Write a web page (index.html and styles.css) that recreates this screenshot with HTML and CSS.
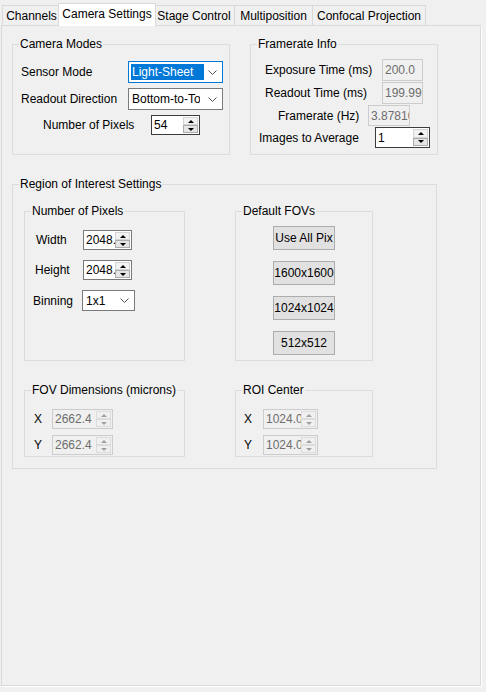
FILE: index.html
```html
<!DOCTYPE html>
<html>
<head>
<meta charset="utf-8">
<link rel="stylesheet" href="styles.css">
</head>
<body>
<div class="window">
  <div class="tabs">
    <div class="tab t1">Channels</div>
    <div class="tab t2 sel">Camera Settings</div>
    <div class="tab t3">Stage Control</div>
    <div class="tab t4">Multiposition</div>
    <div class="tab t5">Confocal Projection</div>
  </div>
  <div class="panel">
    <div class="toprow">
      <fieldset class="grp cam">
        <legend>Camera Modes</legend>
        <div class="row cam-r1">
          <span class="lbl w107">Sensor Mode</span>
          <div class="combo focus w95 h22">
            <span class="ctext hl">Light-Sheet</span>
            <svg class="chev" width="9" height="5" viewBox="0 0 9 5"><polyline points="0.5,0.5 4.5,4.5 8.5,0.5" fill="none" stroke="#555" stroke-width="1"/></svg>
          </div>
        </div>
        <div class="row cam-r2">
          <span class="lbl w107">Readout Direction</span>
          <div class="combo w95 h22">
            <span class="ctext">Bottom-to-Top</span>
            <svg class="chev" width="9" height="5" viewBox="0 0 9 5"><polyline points="0.5,0.5 4.5,4.5 8.5,0.5" fill="none" stroke="#555" stroke-width="1"/></svg>
          </div>
        </div>
        <div class="row cam-r3">
          <span class="lbl w108">Number of Pixels</span>
          <div class="spin dark w49 h20"><span class="val">54</span><span class="btns"><span class="up"></span><span class="dn"></span></span></div>
        </div>
      </fieldset>
      <fieldset class="grp fr">
        <legend>Framerate Info</legend>
        <div class="row fr-a">
          <span class="lbl w117">Exposure Time (ms)</span>
          <div class="tbox dis w41 h22">200.0</div>
        </div>
        <div class="row fr-b">
          <span class="lbl w117">Readout Time (ms)</span>
          <div class="tbox dis w41 h22">199.9952</div>
        </div>
        <div class="row fr-c">
          <span class="lbl w90">Framerate (Hz)</span>
          <div class="tbox dis w42 h21">3.878104</div>
        </div>
        <div class="row fr-d">
          <span class="lbl w116">Images to Average</span>
          <div class="spin dark w55 h21"><span class="val">1</span><span class="btns"><span class="up"></span><span class="dn"></span></span></div>
        </div>
      </fieldset>
    </div>
    <fieldset class="grp roi">
      <legend>Region of Interest Settings</legend>
      <div class="roigrid">
        <fieldset class="grp npix">
          <legend>Number of Pixels</legend>
          <div class="row np-1">
            <span class="lbl w47">Width</span>
            <div class="spin w49 h20"><span class="val">2048.0</span><span class="btns"><span class="up"></span><span class="dn"></span></span></div>
          </div>
          <div class="row np-2">
            <span class="lbl w48">Height</span>
            <div class="spin w49 h20"><span class="val">2048.0</span><span class="btns"><span class="up"></span><span class="dn"></span></span></div>
          </div>
          <div class="row np-3">
            <span class="lbl w49">Binning</span>
            <div class="combo w53 h21">
              <span class="ctext">1x1</span>
              <svg class="chev" width="9" height="5" viewBox="0 0 9 5"><polyline points="0.5,0.5 4.5,4.5 8.5,0.5" fill="none" stroke="#555" stroke-width="1"/></svg>
            </div>
          </div>
        </fieldset>
        <fieldset class="grp fovs">
          <legend>Default FOVs</legend>
          <div class="btncol">
            <div class="btn">Use All Pix</div>
            <div class="btn">1600x1600</div>
            <div class="btn">1024x1024</div>
            <div class="btn">512x512</div>
          </div>
        </fieldset>
        <fieldset class="grp dims">
          <legend>FOV Dimensions (microns)</legend>
          <div class="row d-1">
            <span class="lbl w18">X</span>
            <div class="spin dis w61 h20"><span class="val">2662.4</span><span class="btns"><span class="up"></span><span class="dn"></span></span></div>
          </div>
          <div class="row d-2">
            <span class="lbl w18">Y</span>
            <div class="spin dis w61 h20"><span class="val">2662.4</span><span class="btns"><span class="up"></span><span class="dn"></span></span></div>
          </div>
        </fieldset>
        <fieldset class="grp center">
          <legend>ROI Center</legend>
          <div class="row c-1">
            <span class="lbl w19">X</span>
            <div class="spin dis w55 h20"><span class="val">1024.0</span><span class="btns"><span class="up"></span><span class="dn"></span></span></div>
          </div>
          <div class="row c-2">
            <span class="lbl w19">Y</span>
            <div class="spin dis w55 h20"><span class="val">1024.0</span><span class="btns"><span class="up"></span><span class="dn"></span></span></div>
          </div>
        </fieldset>
      </div>
    </fieldset>
  </div>
</div>
</body>
</html>
```

FILE: styles.css
```css
html, body {
  margin: 0;
  padding: 0;
  background: #f0f0f0;
}
body {
  font-family: "Liberation Sans", Arial, sans-serif;
  font-size: 12px;
  color: #000;
}
.window {
  width: 486px;
  height: 692px;
  background: #f0f0f0;
  overflow: hidden;
}

/* Tabs */
.tabs {
  display: flex;
  align-items: flex-end;
  height: 25px;
  padding-left: 2px;
}
.tab {
  box-sizing: border-box;
  height: 20px;
  border: 1px solid #d9d9d9;
  border-bottom: none;
  background: #f0f0f0;
  text-align: center;
  line-height: 20px;
  white-space: nowrap;
  margin-left: -1px;
}
.t1 { width: 59px; margin-left: 0; }
.t2 { width: 94px; }
.t3 { width: 82px; }
.t4 { width: 79px; }
.t5 { width: 114px; }
.tab.sel {
  position: relative;
  z-index: 1;
  width: 98px;
  height: 23px;
  margin-left: -3px;
  margin-right: -2px;
  margin-bottom: -1px;
  background: #fff;
  line-height: 21px;
}

/* Panel */
.panel {
  box-sizing: border-box;
  margin-left: 1px;
  width: 480px;
  height: 661px;
  border: 1px solid #d9d9d9;
  box-shadow: 1px 1px 0 #fff;
  padding: 11px 0 0 10px;
}
.toprow {
  display: flex;
  gap: 20px;
}

/* Group boxes */
.grp {
  box-sizing: border-box;
  margin: 0;
  padding: 0;
  min-width: 0;
  border: 1px solid #dcdcdc;
}
.grp > legend {
  margin-left: 6px;
  padding: 0 1px;
  line-height: 14px;
  font-size: 12px;
}
.cam { width: 218px; height: 118px; }
.fr { width: 188px; height: 118px; }
.roi {
  width: 425px;
  height: 292px;
  margin-top: 22px;
}
.roigrid {
  display: grid;
  grid-template-columns: 161px 138px;
  column-gap: 50px;
  row-gap: 22px;
  margin: 13px 0 0 11px;
}
.npix, .fovs { height: 157px; }
.dims, .center { height: 74px; }

/* Rows */
.row {
  display: flex;
  align-items: center;
}
.lbl { white-space: nowrap; flex: none; }
.w18 { width: 18px; }
.w19 { width: 19px; }
.w47 { width: 47px; }
.w48 { width: 48px; }
.w49 { width: 49px; }
.w53 { width: 53px; }
.w55 { width: 55px; }
.w61 { width: 61px; }
.w41 { width: 41px; }
.w42 { width: 42px; }
.w90 { width: 90px; }
.w95 { width: 95px; }
.w107 { width: 107px; }
.w108 { width: 108px; }
.w116 { width: 116px; }
.w117 { width: 117px; }
.h20 { height: 20px; }
.h21 { height: 21px; }
.h22 { height: 22px; }

.cam-r1 { margin-top: 10px; padding-left: 8px; }
.cam-r2 { margin-top: 5px; padding-left: 8px; }
.cam-r3 { margin-top: 5px; padding-left: 30px; }

.fr-a { margin-top: 8px; padding-left: 14px; }
.fr-b { margin-top: 1px; padding-left: 14px; }
.fr-c { margin-top: 1px; padding-left: 27px; }
.fr-d { margin-top: 1px; padding-left: 8px; }

.np-1 { margin-top: 12px; padding-left: 11px; }
.np-2 { margin-top: 10px; padding-left: 10px; }
.np-3 { margin-top: 10px; padding-left: 8px; }

.d-1 { margin-top: 12px; padding-left: 9px; }
.d-2 { margin-top: 6px; padding-left: 9px; }
.c-1 { margin-top: 12px; padding-left: 8px; }
.c-2 { margin-top: 6px; padding-left: 8px; }

/* Combo box */
.combo {
  box-sizing: border-box;
  flex: none;
  display: flex;
  align-items: center;
  border: 1px solid #7a7a7a;
  background: #fff;
  padding: 2px 0 2px 2px;
}
.combo.focus { border-color: #0078d7; }
.ctext {
  flex: 1;
  min-width: 0;
  height: 16px;
  line-height: 16px;
  padding-left: 1px;
  overflow: hidden;
  white-space: nowrap;
}
.ctext.hl {
  background: #0078d7;
  color: #fff;
  flex: none;
  width: 72px;
}
.hl + .chev { margin-left: auto; }
.chev {
  flex: none;
  margin: 0 5px 0 8px;
}

/* Text box */
.tbox {
  box-sizing: border-box;
  flex: none;
  border: 1px solid #7a7a7a;
  background: #fff;
  padding-left: 2px;
  overflow: hidden;
  white-space: nowrap;
  display: flex;
  align-items: center;
}
.tbox.dis {
  border-color: #cccccc;
  background: #f0f0f0;
  color: #6d6d6d;
}

/* Spin box */
.spin {
  box-sizing: border-box;
  flex: none;
  display: flex;
  border: 1px solid #7a7a7a;
  background: #fff;
}
.spin.dark { border-color: #3c3c3c; }
.spin .val {
  flex: 1;
  min-width: 0;
  padding-left: 2px;
  overflow: hidden;
  white-space: nowrap;
  display: flex;
  align-items: center;
}
.spin .btns {
  flex: none;
  width: 15px;
  display: flex;
  flex-direction: column;
  margin: 1px 1px 1px 0;
}
.spin .btns span {
  flex: 1;
  box-sizing: border-box;
  border: 1px solid #d4d4d4;
  background: #f2f2f2;
  display: flex;
  align-items: center;
  justify-content: center;
}
.spin .btns .dn {
  border-color: #acacac;
  background: #e5e5e5;
}
.spin .btns .up::after,
.spin .btns .dn::after {
  content: "";
  width: 0;
  height: 0;
  border-left: 3px solid transparent;
  border-right: 3px solid transparent;
}
.spin .btns .up::after { border-bottom: 3px solid #000; }
.spin .btns .dn::after { border-top: 3px solid #000; }
.spin.dis {
  border-color: #cccccc;
  background: #f0f0f0;
}
.spin.dis .val { color: #6d6d6d; }
.spin.dis .btns span,
.spin.dis .btns .dn {
  border-color: #dcdcdc;
  background: #f0f0f0;
}
.spin.dis .btns .up::after { border-bottom-color: #a0a0a0; }
.spin.dis .btns .dn::after { border-top-color: #a0a0a0; }

/* Buttons */
.btncol {
  display: flex;
  flex-direction: column;
  align-items: center;
  gap: 11px;
  margin-top: 8px;
}
.btn {
  box-sizing: border-box;
  width: 62px;
  height: 24px;
  border: 1px solid #adadad;
  background: #e1e1e1;
  display: flex;
  align-items: center;
  justify-content: center;
  white-space: nowrap;
}
```
